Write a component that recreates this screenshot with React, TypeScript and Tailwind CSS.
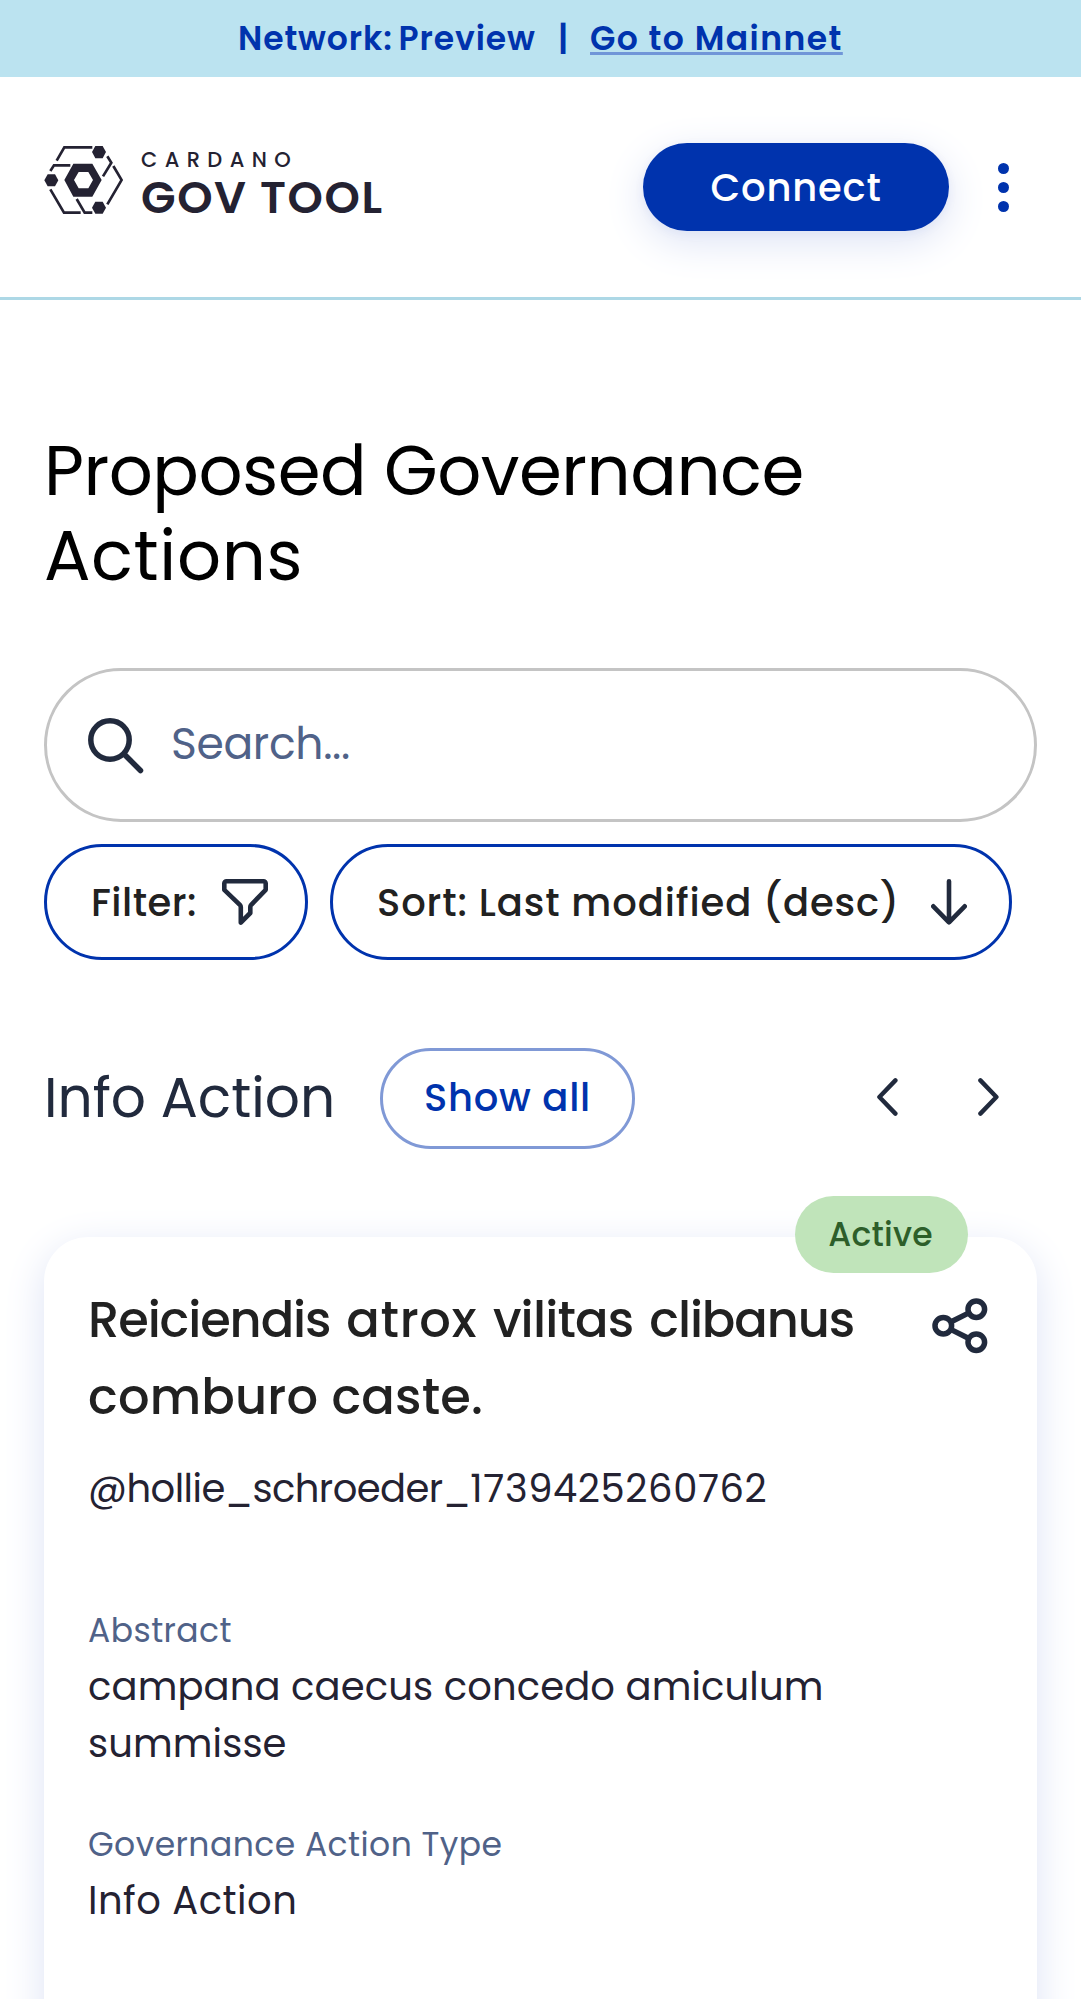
import type { ReactNode } from "react";

function CardanoMark() {
  return (
    <svg className="mt-px h-[68px] w-[79px] shrink-0" viewBox="27 33 237 204" fill="none">
      <g fill="#242232">
        <path d="M171 51 181 33h22l10 18-10 19h-22z" />
        <path d="M28 136l10-18h22l10 18-10 18H38z" />
        <path d="M171 218l10-18h22l10 18-10 18h-22z" />
        <path
          fillRule="evenodd"
          d="M88 135l27-49h57l28 49-28 50h-57zM117 135l14 25h29l14-25-14-24h-29z"
        />
      </g>
      <g stroke="#242232" strokeWidth="8">
        <path d="M65 77 88 37h84" />
        <path d="M46 108l11-17h49" />
        <path d="M204 124l25-41-12-19" />
        <path d="M235 93l25 42-43 73" />
        <path d="M46 163l41 70h50" />
        <path d="M125 192l24 41h23" />
      </g>
    </svg>
  );
}

function SearchIcon() {
  return (
    <svg className="mt-px size-14 shrink-0" viewBox="0 0 56 56" fill="none" stroke="#212a3d" strokeWidth="5.5" strokeLinecap="round">
      <circle cx="22" cy="22" r="19.2" />
      <path d="M37 37l15.5 15.5" />
    </svg>
  );
}

function FunnelIcon() {
  return (
    <svg className="size-[46px] shrink-0" viewBox="0 0 46 46" fill="none" stroke="#212a3d" strokeWidth="4.6" strokeLinecap="round" strokeLinejoin="round">
      <path d="M4.5 2.3h37a2.2 2.2 0 0 1 2.2 2.2v6.3L29.2 25.8q-.9 1-.9 2.2v6L18.8 43.5V28q0-1.3-.9-2.2L2.3 10.8V4.5a2.2 2.2 0 0 1 2.2-2.2z" />
    </svg>
  );
}

function ArrowDownIcon() {
  return (
    <svg className="h-[46px] w-9 shrink-0" viewBox="0 0 36 46" fill="none" stroke="#212a3d" strokeWidth="4.6" strokeLinecap="round" strokeLinejoin="round">
      <path d="M18 2.3v41M2.3 27.3 18 43.3l15.7-16" />
    </svg>
  );
}

function Chevron({ flip = false }: { flip?: boolean }) {
  return (
    <svg className="h-[38px] w-[21px]" viewBox="0 0 21 38" fill="none" stroke="#212a3d" strokeWidth="4.4" strokeLinecap="round" strokeLinejoin="round">
      <path d={flip ? "M2.4 2.4 18.4 19 2.4 35.6" : "M18.4 2.4 2.4 19l16 16.6"} />
    </svg>
  );
}

function ShareIcon() {
  return (
    <svg className="mt-[17px] mr-[5px] size-[56px] shrink-0" viewBox="0 0 56 56" fill="none" stroke="#212a3d" strokeWidth="5.5">
      <circle cx="11.3" cy="27.7" r="8.3" />
      <circle cx="44.3" cy="11.2" r="8.3" />
      <circle cx="44.3" cy="44.2" r="8.3" />
      <path d="M18.7 24l18.2-9.1M18.7 31.4l18.2 9.1" />
    </svg>
  );
}

function Label({ children }: { children: ReactNode }) {
  return <div className="text-[33px] leading-[49px] tracking-[0.45px] text-[#506288]">{children}</div>;
}

export default function App() {
  return (
    <div className="h-[1999px] w-[1081px] overflow-hidden bg-white font-[Poppins,Inter,sans-serif] text-[#212121]">
      <div className="flex h-[77px] items-center bg-[#bbe3f0] pl-[238px] text-[33px] font-semibold whitespace-nowrap text-[#0033ad]">
        <span className="w-[299px] tracking-[0.9px] [word-spacing:-3px]">Network: Preview</span>
        <span className="w-[52px] text-center">|</span>
        <a className="ml-px tracking-[1.45px] underline decoration-[#7096d8] decoration-[3px] underline-offset-[2px] [text-decoration-skip-ink:none]">
          Go to Mainnet
        </a>
      </div>

      <header className="flex h-[223px] items-center justify-between border-b-[3px] border-[#add8e6] pr-[72px] pl-11">
        <div className="mb-2 flex items-start text-[#242232]">
          <CardanoMark />
          <div className="ml-[18px] whitespace-nowrap">
            <div className="text-[21px] leading-[29px] font-medium tracking-[7.4px]">CARDANO</div>
            <div className="text-[45px] leading-[47px] font-semibold tracking-[1.6px]">GOV TOOL</div>
          </div>
        </div>
        <div className="flex items-center">
          <button className="h-[88px] w-[306px] rounded-full bg-[#0033ad] pt-[2px] text-[38.5px] font-medium tracking-[0.8px] text-white shadow-[0_11px_41px_#dde3f5,0_3px_8px_rgba(0,51,173,0.1)]">
            Connect
          </button>
          <div className="ml-[49px] flex w-[11px] flex-col gap-2">
            <i className="size-[11px] rounded-full bg-[#0033ad]" />
            <i className="size-[11px] rounded-full bg-[#0033ad]" />
            <i className="size-[11px] rounded-full bg-[#0033ad]" />
          </div>
        </div>
      </header>

      <main className="px-11 pt-[129px]">
        <h1 className="text-[69px] leading-[85px] text-black">
          <span className="tracking-[-0.5px]">Proposed Governance</span>
          <br />
          <span className="tracking-[0.6px]">Actions</span>
        </h1>

        <div className="mt-[69px] flex h-[154px] w-[993px] items-center rounded-full border-3 border-[#c4c4c4] pl-[41px]">
          <SearchIcon />
          <span className="ml-[27px] pb-[3px] text-[44px] tracking-[-0.33px] text-[#506288]">Search...</span>
        </div>

        <div className="mt-[22px] flex gap-[22px] text-[38.5px] font-medium whitespace-nowrap">
          <div className="flex h-[116px] w-[264px] items-center justify-between rounded-full border-3 border-[#0033ad] pr-[37px] pl-[44px]">
            <span className="pt-[2px] tracking-[0.5px]">Filter:</span>
            <FunnelIcon />
          </div>
          <div className="flex h-[116px] w-[682px] items-center justify-between rounded-full border-3 border-[#0033ad] pr-[42px] pl-[44px]">
            <span className="pt-[2px] tracking-[0.9px]">Sort: Last modified (desc)</span>
            <ArrowDownIcon />
          </div>
        </div>

        <div className="mt-[88px] flex h-[101px] items-center">
          <h2 className="w-[336px] pb-px text-[55px] leading-[80px] whitespace-nowrap text-[#212a3d]">
            Info Action
          </h2>
          <button className="h-[101px] w-[255px] rounded-full border-3 border-[#8099d6] pb-[2px] text-[38.5px] font-medium tracking-[0.74px] text-[#0033ad]">
            Show all
          </button>
          <div className="mb-[3px] ml-[242px] flex gap-20">
            <Chevron />
            <Chevron flip />
          </div>
        </div>

        <article className="relative mt-[88px] h-[900px] w-[993px] rounded-[44px] bg-white px-11 pt-[44px] shadow-[0_11px_41px_#dde3f5]">
          <span className="absolute -top-[41px] right-[69px] flex h-[77px] w-[173px] items-center justify-center rounded-full bg-[#c0e4ba] pr-0.5 text-[33px] font-medium tracking-[0.24px] text-[#2d5e2a]">
            Active
          </span>
          <div className="flex items-start justify-between">
            <h3 className="text-[49.5px] leading-[77px] font-medium whitespace-nowrap">
              <span className="[word-spacing:3px]">
                <span className="tracking-[-1.1px]">Reiciendis</span> <span className="tracking-[0.7px]">atrox</span>{" "}
                <span className="tracking-[-0.8px]">vilitas</span> <span className="tracking-[-1.1px]">clibanus</span>
              </span>
              <br />
              <span className="tracking-[0.19px]">comburo caste.</span>
            </h3>
            <ShareIcon />
          </div>
          <div className="mt-[25px] text-[38.5px] leading-[57px] text-[#242232]">
            <span className="tracking-[-0.55px]">@hollie_schroeder_</span>
            <span className="tracking-[0.6px]">1739425260762</span>
          </div>

          <div className="mt-[89px]">
            <Label>Abstract</Label>
            <p className="mt-[3px] text-[38.5px] leading-[57px] tracking-[0.13px] text-[#242232]">
              campana caecus concedo amiculum
              <br />
              summisse
            </p>
          </div>

          <div className="mt-12">
            <Label>Governance Action Type</Label>
            <p className="mt-[3px] text-[38.5px] leading-[57px] tracking-[0.5px] text-[#242232]">Info Action</p>
          </div>
        </article>
      </main>
    </div>
  );
}
